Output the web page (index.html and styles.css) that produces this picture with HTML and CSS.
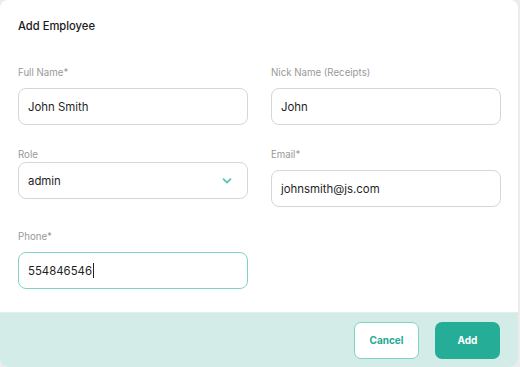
FILE: index.html
```html
<!DOCTYPE html>
<html lang="en">

<head>
    <meta charset="UTF-8" />
    <meta name="viewport" content="width=device-width, initial-scale=1.0" />
    <title>Add Employee</title>
    <link rel="stylesheet" href="styles.css">
</head>

<body>
    <div class="modal">
        <div class="modal-head">
            <h2>Add Employee</h2>
        </div>

        <div class="form-grid">
            <div class="field">
                <label>Full Name*</label>
                <div class="box">John Smith</div>
            </div>
            <div class="field">
                <label>Nick Name (Receipts)</label>
                <div class="box">John</div>
            </div>
            <div class="field field-select">
                <label>Role</label>
                <div class="box select">
                    <span>admin</span>
                    <svg width="10" height="6" viewBox="0 0 10 6">
                        <path d="M1.5 1.2 L5 4.5 L8.5 1.2" fill="none" stroke="#5cc5b4" stroke-width="1.8" stroke-linecap="round" stroke-linejoin="round" />
                    </svg>
                </div>
            </div>
            <div class="field">
                <label>Email*</label>
                <div class="box">johnsmith@js.com</div>
            </div>
            <div class="field">
                <label>Phone*</label>
                <div class="box focused">554846546<span class="caret"></span></div>
            </div>
        </div>

        <div class="modal-foot">
            <button class="btn btn-cancel">Cancel</button>
            <button class="btn btn-add">Add</button>
        </div>
    </div>
</body>

</html>
```

FILE: styles.css
```css
* {
    box-sizing: border-box;
    margin: 0;
    padding: 0;
}

body {
    font-family: 'Inter', 'Noto Sans', sans-serif;
    background: #ececec;
    width: 520px;
    height: 367px;
    overflow: hidden;
}

.modal {
    width: 518px;
    height: 367px;
    background: white;
    border-radius: 8px;
    overflow: hidden;
    display: flex;
    flex-direction: column;
}

.modal-head {
    padding: 18px 18px 0;
    height: 65px;
}

.modal-head h2 {
    font-size: 11.2px;
    font-weight: 500;
    color: #1a1a1a;
    line-height: 16px;
}

.form-grid {
    display: grid;
    grid-template-columns: 230px 230px;
    column-gap: 23px;
    row-gap: 22px;
    align-items: start;
    align-content: start;
    padding: 0 18px;
    flex: 1;
}

.field label {
    display: block;
    font-size: 9.7px;
    line-height: 15px;
    color: #999;
    margin-bottom: 8px;
}

.field-select label {
    margin-bottom: 0;
}

.box {
    height: 37px;
    border: 1px solid #d6d6d6;
    border-radius: 8px;
    padding: 0 9px;
    display: flex;
    align-items: center;
    font-size: 11.4px;
    color: #1f1f1f;
}

.select {
    justify-content: space-between;
    padding-right: 15px;
}

.focused {
    border-color: #7fd3c5;
}

.caret {
    display: inline-block;
    width: 1px;
    height: 15px;
    background: #222;
    margin-left: 1px;
}

.modal-foot {
    height: 55px;
    background: #d3ece8;
    border-top: 1px solid #e4eeec;
    display: flex;
    justify-content: flex-end;
    align-items: center;
    gap: 16px;
    padding: 0 18px;
}

.btn {
    width: 65px;
    height: 37px;
    border-radius: 7px;
    font-family: inherit;
    font-size: 10px;
    font-weight: 700;
    cursor: pointer;
}

.btn-cancel {
    background: white;
    border: 1px solid #7fd3c5;
    color: #26a893;
}

.btn-add {
    background: #25ad98;
    border: none;
    color: white;
}
```
